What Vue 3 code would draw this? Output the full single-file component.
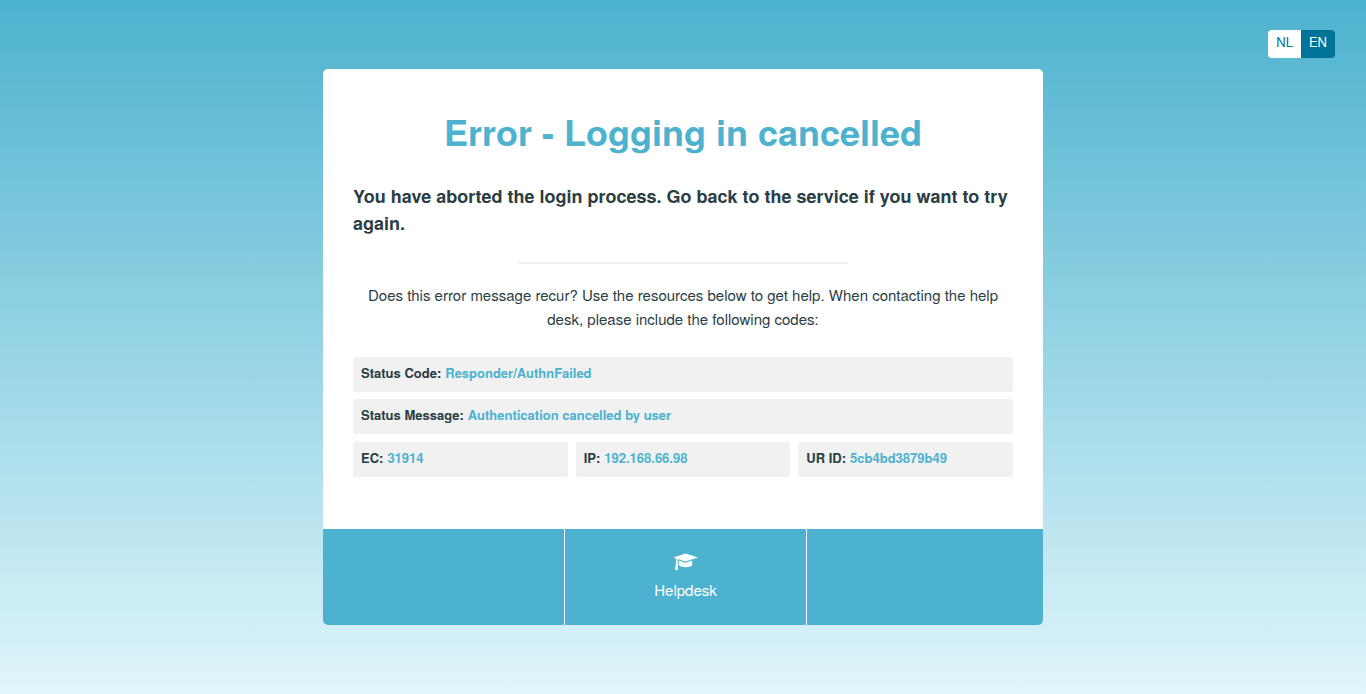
<script setup>
const languages = [
  { code: 'NL', active: false },
  { code: 'EN', active: true },
]
const rows = [
  { label: 'Status Code:', value: 'Responder/AuthnFailed', wide: true },
  { label: 'Status Message:', value: 'Authentication cancelled by user', wide: true },
  { label: 'EC:', value: '31914' },
  { label: 'IP:', value: '192.168.66.98' },
  { label: 'UR ID:', value: '5cb4bd3879b49' },
]
</script>

<template>
  <div class="page">
    <nav class="languages" aria-label="Language">
      <a v-for="l in languages" :key="l.code" href="#" :class="{ active: l.active }">{{ l.code }}</a>
    </nav>
    <main class="card">
      <section class="content">
        <h1>Error - Logging in cancelled</h1>
        <h2>You have aborted the login process. Go back to the service if you want to try again.</h2>
        <hr>
        <p class="help">Does this error message recur? Use the resources below to get help. When contacting the help desk, please include the following codes:</p>
        <dl class="codes">
          <div v-for="r in rows" :key="r.label" class="code" :class="{ wide: r.wide }">
            <dt>{{ r.label }}</dt>
            <dd>{{ r.value }}</dd>
          </div>
        </dl>
      </section>
      <footer class="bar">
        <div class="cell"></div>
        <a class="cell link" href="#">
          <svg class="icon" viewBox="0 0 26 18" aria-hidden="true">
            <path d="M12.500 .4 25 4.500 12.500 8.600 5.200 6.300 4.700 6.500 4.500 9.200Q5.200 9.900 4.800 10.800L5.200 16.400Q3.600 17.300 2 16.500L2.800 10.800Q2.300 9.900 3 9.200L3.200 5.700.4 4.500Z"/>
            <path d="M5.800 7.500 12.500 9.700 19.200 7.500V12.300Q17 14.300 12.500 14.300T5.800 12.300Z"/>
          </svg>
          <span>Helpdesk</span>
        </a>
        <div class="cell"></div>
      </footer>
    </main>
  </div>
</template>

<style>
body {
  margin: 0;
}
</style>

<style scoped>
.page {
  position: relative;
  box-sizing: border-box;
  min-height: 100vh;
  padding: 69px 20px;
  background: linear-gradient(#4db2cf, #e0f6fb);
  color: #2b3e44;
  font-family: "Nimbus Sans", "TeX Gyre Heros", Helvetica, "Liberation Sans", Arial, sans-serif;
}
.languages {
  position: absolute;
  top: 30px;
  right: 31px;
  display: flex;
  overflow: hidden;
  border-radius: 4px;
}
.languages a {
  padding: 0 8px;
  background: #fff;
  color: #007399;
  font-size: 13px;
  line-height: 24px;
  height: 28px;
  text-decoration: none;
}
.languages a.active {
  background: #007399;
  color: #fff;
}
.card {
  max-width: 720px;
  margin: 0 auto;
  overflow: hidden;
  border-radius: 5px;
  background: #fff;
}
.content {
  padding: 40px 30px 52px;
}
h1 {
  margin: 0 0 30px;
  color: #4db2cf;
  font-size: 36px;
  line-height: 44px;
  text-align: center;
}
h2 {
  margin: 0 0 25px;
  font-size: 18px;
  line-height: 27px;
}
hr {
  width: 50%;
  height: 2px;
  margin: 0 auto 19px;
  border: 0;
  background: #f1f1f1;
}
.help {
  margin: 0 0 26px;
  font-size: 15px;
  line-height: 24px;
  text-align: center;
}
.codes {
  display: flex;
  flex-wrap: wrap;
  gap: 8px;
  margin: 0;
}
.code {
  display: flex;
  flex: 1;
  gap: 4px;
  box-sizing: border-box;
  height: 35px;
  padding: 0 8px;
  border-radius: 2px;
  background: #f1f1f1;
  font-size: 13px;
  font-weight: bold;
  line-height: 31px;
}
.wide {
  flex: 0 0 100%;
}
.wide:first-child {
  margin-bottom: -1px;
}
dd {
  margin: 0;
  color: #4db2cf;
}
.bar {
  display: grid;
  grid-template-columns: 241px 241px 1fr;
  gap: 1px;
  background: #fff;
}
.cell {
  min-height: 96px;
  background: #4db2cf;
}
.link {
  display: flex;
  flex-direction: column;
  align-items: center;
  color: #fff;
  font-size: 15px;
  line-height: 24px;
  text-decoration: none;
}
.icon {
  width: 26px;
  height: 18px;
  margin: 24px 0 7px;
  fill: currentColor;
}
</style>
